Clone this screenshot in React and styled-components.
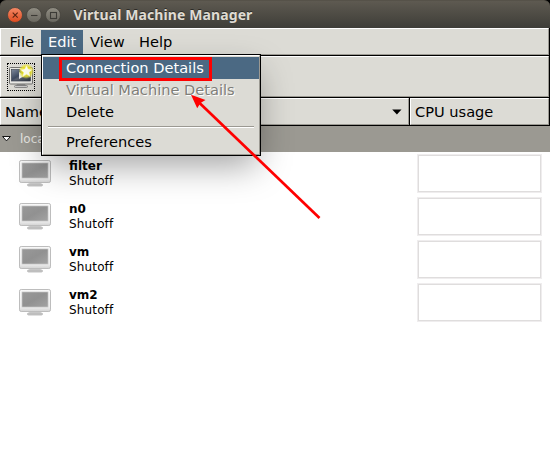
import React from "react";
import styled, { createGlobalStyle, css } from "styled-components";

const Global = createGlobalStyle`
  * { box-sizing: border-box; }
  body { margin: 0; background: #fff; overflow: hidden; }
`;

const Window = styled.div`
  position: relative;
  width: 550px;
  height: 449px;
  display: flex;
  flex-direction: column;
  background: #fff;
  overflow: hidden;
  color: #000;
  font: 14.6px/20px "DejaVu Sans", sans-serif;
  white-space: nowrap;
`;

const TitleFrame = styled.div`
  flex: none;
  height: 28px;
  background: #000;
`;

const TitleBar = styled.header`
  height: 28px;
  display: flex;
  align-items: center;
  padding-left: 7px;
  border-radius: 6px 6px 0 0;
  border-top: 1px solid #565249;
  background: linear-gradient(#5e5a51, #3e3d38);
`;

const Controls = styled.div`
  display: flex;
  gap: 3px;
  svg { display: block; }
`;

const Title = styled.h1`
  margin: 0 0 0 12.5px;
  font: bold 14px/20px "Noto Sans", sans-serif;
  letter-spacing: 0.1px;
  color: #dfdbd2;
  text-shadow: 0 -1px 0 #2d2c28;
`;

const bevel = css`
  background: #dcdbd5;
  border-top: 1px solid #fff;
  border-left: 1px solid #fff;
  border-right: 1px solid #9b9992;
  border-bottom: 1px solid #9b9992;
`;

const Chrome = styled.div`
  flex: none;
  border-right: 1px solid #000;
  border-bottom: 1px solid #000;
  height: ${(p) => p.$height}px;
  display: flex;
`;

const MenuBar = styled.nav`
  ${bevel}
  flex: 1;
  display: flex;
  padding-top: 1px;
`;

const MenuTitle = styled.div`
  width: ${(p) => p.$width}px;
  height: 25px;
  padding: 2px 0 0 ${(p) => p.$inset}px;
  background: ${(p) => (p.$active ? "#4b6983" : "transparent")};
  color: ${(p) => (p.$active ? "#fff" : "#000")};
`;

const ToolBar = styled.div`
  ${bevel}
  flex: 1;
  padding: 6px 0 0 6px;
`;

const ToolButton = styled.div`
  width: 28px;
  height: 28px;
  border: 1px dotted #000;
  svg { display: block; }
`;

const HeaderCell = styled.div`
  ${bevel}
  display: flex;
  align-items: center;
  justify-content: space-between;
  flex: ${(p) => (p.$width ? `0 0 ${p.$width}px` : "1")};
  padding: 0 6px 0 4px;
`;

const Divider = styled.div`
  width: 1px;
  background: #000;
`;

const Connection = styled.div`
  flex: none;
  height: 26px;
  display: flex;
  align-items: center;
  gap: 9px;
  padding-left: 2px;
  background: #9b9992;
  color: #e9e8e4;
  font-size: 12px;
`;

const ConnectionName = styled.span`
  width: 22px;
  overflow: hidden;
`;

const MachineRow = styled.div`
  flex: none;
  height: 43px;
  display: flex;
  align-items: flex-start;
  justify-content: space-between;
  padding: 2px 8px 0 18px;
`;

const MachineInfo = styled.div`
  display: flex;
  gap: 17px;
  padding-top: 4px;
  svg { display: block; }
`;

const MachineText = styled.div`
  font-size: 12px;
  line-height: 15px;
  padding-top: 1px;
`;

const MachineName = styled.div`
  font-weight: bold;
`;

const MachineState = styled.div`
  letter-spacing: 0.15px;
`;

const Graph = styled.div`
  width: 125px;
  height: 39px;
  border: 1px solid #efedee;
  box-shadow: inset 0 0 0 1px #dfdddd;
  background: #fff;
`;

const Menu = styled.div`
  position: absolute;
  left: 41px;
  top: 54px;
  width: 220px;
  height: 102px;
  border: 1px solid #000;
  box-shadow: 0 14px 34px -4px rgba(0, 0, 0, 0.36);
`;

const MenuInner = styled.div`
  ${bevel}
  height: 100%;
  padding-top: 1px;
  display: flex;
  flex-direction: column;
`;

const MenuItem = styled.div`
  height: 22px;
  flex: none;
  padding: 1px 0 0 23px;
  background: ${(p) => (p.$active ? "#4b6983" : "transparent")};
  color: ${(p) => (p.$active ? "#fff" : p.$disabled ? "#7f7e79" : "#000")};
  text-shadow: ${(p) => (p.$disabled ? "1px 1px 0 #fff" : "none")};
`;

const Separator = styled.div`
  flex: none;
  height: 2px;
  margin: 3px 5px;
  border-top: 1px solid #9b9992;
  border-bottom: 1px solid #fff;
`;

const Highlight = styled.div`
  position: absolute;
  left: 59px;
  top: 57px;
  width: 153px;
  height: 24px;
  border: 3px solid #f00;
`;

const Arrow = styled.svg`
  position: absolute;
  left: 185px;
  top: 90px;
`;

function WindowButton({ kind }) {
  const close = kind === "close";
  return (
    <svg width="16" height="16" viewBox="0 0 16 16">
      <defs>
        <linearGradient id={`btn-${kind}`} x1="0" y1="0" x2="0" y2="1">
          <stop offset="0" stopColor={close ? "#f58a67" : "#918e84"} />
          <stop offset="1" stopColor={close ? "#df4a1e" : "#69675f"} />
        </linearGradient>
      </defs>
      <circle cx="8" cy="8" r="7.5" fill={`url(#btn-${kind})`} stroke="#45433c" strokeWidth="0.8" />
      <g stroke="#3c3b36" strokeWidth="1.1" fill="none">
        {close && <path d="M5.7 5.7l5 5M10.7 5.7l-5 5" stroke="#5b2411" />}
        {kind === "minimize" && <path d="M5 8.5h6.5" />}
        {kind === "maximize" && <rect x="5.5" y="5.5" width="6" height="6" />}
      </g>
    </svg>
  );
}

function Monitor({ id }) {
  return (
    <svg width="34" height="29" viewBox="0 0 34 29">
      <defs>
        <linearGradient id={`case-${id}`} x1="0" y1="0" x2="0" y2="1">
          <stop offset="0" stopColor="#f8f8f8" />
          <stop offset="0.8" stopColor="#eee" />
          <stop offset="1" stopColor="#d2d2d2" />
        </linearGradient>
        <linearGradient id={`screen-${id}`} x1="0" y1="0" x2="1" y2="1">
          <stop offset="0" stopColor="#999" />
          <stop offset="0.5" stopColor="#919191" />
          <stop offset="1" stopColor="#a3a3a3" />
        </linearGradient>
      </defs>
      <path d="M12 24h10l1 2H11z" fill="#d4d4d4" />
      <rect x="9.5" y="26" width="15" height="2" rx="1" fill="#c6c6c6" stroke="#b2b2b2" strokeWidth="0.8" />
      <rect x="1.5" y="2.5" width="31" height="22" rx="1.7" fill={`url(#case-${id})`} stroke="#bdbdbd" />
      <rect x="4" y="5" width="26" height="15" fill={`url(#screen-${id})`} stroke="#c4c4c4" strokeWidth="0.7" />
    </svg>
  );
}

function NewMachineIcon() {
  return (
    <svg width="26" height="26" viewBox="0 0 26 26">
      <defs>
        <linearGradient id="new-screen" x1="0" y1="0" x2="1" y2="1">
          <stop offset="0" stopColor="#7f8b9d" />
          <stop offset="0.45" stopColor="#3d4a60" />
          <stop offset="0.55" stopColor="#59616f" />
          <stop offset="1" stopColor="#303641" />
        </linearGradient>
        <radialGradient id="glow">
          <stop offset="0.3" stopColor="#f5ee00" />
          <stop offset="0.7" stopColor="#eee83a" stopOpacity="0.8" />
          <stop offset="1" stopColor="#eee83a" stopOpacity="0" />
        </radialGradient>
      </defs>
      <path d="M9 20h8l1 2H8z" fill="#999" />
      <rect x="6.5" y="21.5" width="13" height="2" rx="1" fill="#ccc" stroke="#777" strokeWidth="0.8" />
      <rect x="1.5" y="3.5" width="23" height="16.5" rx="1" fill="#e9e9e5" stroke="#737371" />
      <rect x="3.5" y="5.5" width="19" height="11.5" fill="url(#new-screen)" stroke="#333a46" strokeWidth="0.6" />
      <path d="M11 8v7l6-3.5z" fill="#e8eaed" />
      <circle cx="18.3" cy="7.2" r="7.8" fill="url(#glow)" />
      <path d="M18.5 1l1.8 4 4.4.4-3.3 2.9 1 4.4-3.9-2.3-4.1 2.6 1.1-4.6-3.5-3 4.6-.4z" fill="#fffff2" stroke="#f5e957" strokeWidth="0.5" />
    </svg>
  );
}

const machines = ["filter", "n0", "vm", "vm2"];

export default function App() {
  return (
    <Window>
      <Global />
      <TitleFrame>
        <TitleBar>
          <Controls>
            <WindowButton kind="close" />
            <WindowButton kind="minimize" />
            <WindowButton kind="maximize" />
          </Controls>
          <Title>Virtual Machine Manager</Title>
        </TitleBar>
      </TitleFrame>
      <Chrome $height={28}>
        <MenuBar>
          <MenuTitle $width={40} $inset={8.5}>File</MenuTitle>
          <MenuTitle $width={42} $inset={7} $active>Edit</MenuTitle>
          <MenuTitle $width={49} $inset={7}>View</MenuTitle>
          <MenuTitle $width={48} $inset={7}>Help</MenuTitle>
        </MenuBar>
      </Chrome>
      <Chrome $height={42}>
        <ToolBar>
          <ToolButton><NewMachineIcon /></ToolButton>
        </ToolBar>
      </Chrome>
      <Chrome $height={28}>
        <HeaderCell $width={409}>
          Name
          <svg width="10" height="6" viewBox="0 0 10 6"><path d="M0.2 0.5h9.3L4.9 5.5z" /></svg>
        </HeaderCell>
        <Divider />
        <HeaderCell>CPU usage</HeaderCell>
      </Chrome>
      <Connection>
        <svg width="9" height="6" viewBox="0 0 9 6"><path d="M0.6 0.5h7.8L4.5 4.9z" fill="#fff" stroke="#000" strokeWidth="0.9" /></svg>
        <ConnectionName>local</ConnectionName>
      </Connection>
      {machines.map((name) => (
        <MachineRow key={name}>
          <MachineInfo>
            <Monitor id={name} />
            <MachineText>
              <MachineName>{name}</MachineName>
              <MachineState>Shutoff</MachineState>
            </MachineText>
          </MachineInfo>
          <Graph />
        </MachineRow>
      ))}
      <Menu>
        <MenuInner>
          <MenuItem $active>Connection Details</MenuItem>
          <MenuItem $disabled>Virtual Machine Details</MenuItem>
          <MenuItem>Delete</MenuItem>
          <Separator />
          <MenuItem>Preferences</MenuItem>
        </MenuInner>
      </Menu>
      <Highlight />
      <Arrow width="140" height="135" viewBox="185 90 140 135">
        <path d="M319.5 218L198 101.5" stroke="#f00" strokeWidth="2.7" />
        <path d="M191 94.8L205.5 100l-5 3-3.3 5.3z" fill="#f00" />
      </Arrow>
    </Window>
  );
}
